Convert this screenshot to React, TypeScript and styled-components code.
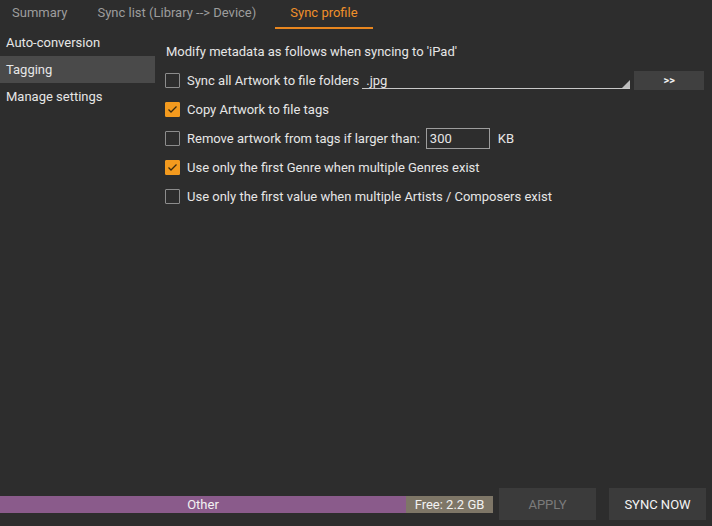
import React from "react";
import styled, { createGlobalStyle } from "styled-components";

const GlobalStyle = createGlobalStyle`
    html, body {
        margin: 0;
        padding: 0;
        background: #2d2d2d;
    }
    body {
        font-family: Roboto, "Liberation Sans", sans-serif;
        font-size: 13px;
        color: #e6e6e6;
    }
`;

const Page = styled.div`
    display: flex;
    flex-direction: column;
    width: 712px;
    height: 526px;
    background: #2d2d2d;
    overflow: hidden;
    white-space: nowrap;
`;

const TabBar = styled.div`
    display: flex;
    gap: 4px;
    height: 29px;
    margin-left: -1px;
`;

const Tab = styled.div<{ $active?: boolean }>`
    display: flex;
    align-items: center;
    padding: 0 ${(p) => (p.$active ? "15px" : "13px")} 2px;
    margin-left: ${(p) => (p.$active ? "2px" : "0")};
    color: ${(p) => (p.$active ? "#f0902a" : "#9d9d9d")};
    border-bottom: 2px solid ${(p) => (p.$active ? "#e8861f" : "transparent")};
    box-sizing: border-box;
`;

const Main = styled.div`
    display: flex;
    flex: 1;
`;

const Sidebar = styled.div`
    display: flex;
    flex-direction: column;
    width: 155px;
    flex-shrink: 0;
`;

const SideItem = styled.div<{ $selected?: boolean }>`
    display: flex;
    align-items: center;
    height: 27px;
    padding-left: 6px;
    background: ${(p) => (p.$selected ? "#4a4a4a" : "transparent")};
`;

const Content = styled.div`
    display: flex;
    flex-direction: column;
    flex: 1;
    padding: 7px 8px 0 10px;
`;

const Title = styled.div`
    display: flex;
    align-items: center;
    height: 30px;
    padding-left: 1px;
`;

const Row = styled.div`
    display: flex;
    align-items: center;
    height: 29px;
`;

const Box = styled.div<{ $checked?: boolean }>`
    display: flex;
    align-items: center;
    justify-content: center;
    width: 15px;
    height: 15px;
    box-sizing: border-box;
    border-radius: 1px;
    border: 1px solid ${(p) => (p.$checked ? "#f39a1e" : "#8c8c8c")};
    background: ${(p) => (p.$checked ? "#f39a1e" : "transparent")};
    margin-right: 7px;
    flex-shrink: 0;
`;

const Combo = styled.div`
    position: relative;
    display: flex;
    align-items: flex-end;
    width: 268px;
    height: 17px;
    flex-shrink: 0;
    margin-left: 3px;
    padding-left: 4px;
    box-sizing: border-box;
    border-bottom: 1px solid #c8c8c8;

    &::after {
        content: "";
        position: absolute;
        right: 0;
        bottom: 0;
        border-style: solid;
        border-width: 0 0 8px 8px;
        border-color: transparent transparent #bdbdbd transparent;
    }
`;

const SmallButton = styled.div`
    display: flex;
    align-items: center;
    justify-content: center;
    width: 70px;
    height: 19px;
    flex-shrink: 0;
    margin-left: 4px;
    background: #404040;
    color: #f0f0f0;
    font-size: 11px;
    font-weight: bold;
`;

const NumberBox = styled.div`
    display: flex;
    align-items: center;
    width: 64px;
    height: 21px;
    box-sizing: border-box;
    margin-left: 6px;
    padding-left: 3px;
    border: 1px solid #9d9d9d;
`;

const Unit = styled.span`
    margin-left: 8px;
`;

const Footer = styled.div`
    display: flex;
    align-items: center;
    height: 32px;
    padding-bottom: 6px;
`;

const Segment = styled.div<{ $color: string; $width: number }>`
    display: flex;
    align-items: center;
    justify-content: center;
    width: ${(p) => p.$width}px;
    height: 17px;
    background: ${(p) => p.$color};
    color: #f2f2f2;
    font-size: 13px;
`;

const FooterButton = styled.div<{ $disabled?: boolean }>`
    display: flex;
    align-items: center;
    justify-content: center;
    width: 97px;
    height: 32px;
    background: #3b3b3b;
    color: ${(p) => (p.$disabled ? "#7b7b7b" : "#f4f4f4")};
    font-size: 13px;
    margin-left: ${(p) => (p.$disabled ? "6px" : "13px")};
`;

function Check({ checked }: { checked?: boolean }) {
    return (
        <Box $checked={checked}>
            {checked && (
                <svg width="11" height="9" viewBox="0 0 11 9">
                    <polyline points="1.5,4.5 4,7 9.5,1.5" fill="none" stroke="#3a2a10" strokeWidth="1.3" />
                </svg>
            )}
        </Box>
    );
}

export default function App() {
    return (
        <Page>
            <GlobalStyle />
            <TabBar>
                <Tab>Summary</Tab>
                <Tab>Sync list (Library --&gt; Device)</Tab>
                <Tab $active>Sync profile</Tab>
            </TabBar>
            <Main>
                <Sidebar>
                    <SideItem>Auto-conversion</SideItem>
                    <SideItem $selected>Tagging</SideItem>
                    <SideItem>Manage settings</SideItem>
                </Sidebar>
                <Content>
                    <Title>Modify metadata as follows when syncing to 'iPad'</Title>
                    <Row>
                        <Check />
                        <span>Sync all Artwork to file folders</span>
                        <Combo>.jpg</Combo>
                        <SmallButton>&gt;&gt;</SmallButton>
                    </Row>
                    <Row>
                        <Check checked />
                        <span>Copy Artwork to file tags</span>
                    </Row>
                    <Row>
                        <Check />
                        <span>Remove artwork from tags if larger than:</span>
                        <NumberBox>300</NumberBox>
                        <Unit>KB</Unit>
                    </Row>
                    <Row>
                        <Check checked />
                        <span>Use only the first Genre when multiple Genres exist</span>
                    </Row>
                    <Row>
                        <Check />
                        <span>Use only the first value when multiple Artists / Composers exist</span>
                    </Row>
                </Content>
            </Main>
            <Footer>
                <Segment $color="#8a5b8b" $width={406}>Other</Segment>
                <Segment $color="#7e7667" $width={87}>Free: 2.2 GB</Segment>
                <FooterButton $disabled>APPLY</FooterButton>
                <FooterButton>SYNC NOW</FooterButton>
            </Footer>
        </Page>
    );
}
